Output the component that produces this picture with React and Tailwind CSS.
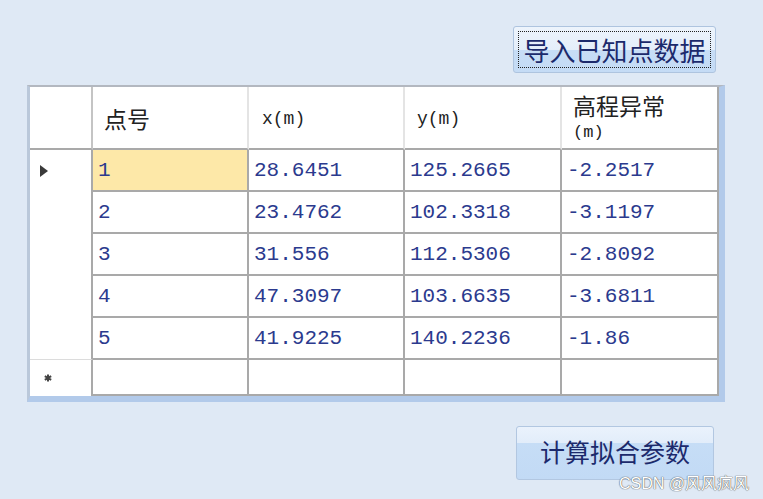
import React from "react";

const rows = [
  ["1", "28.6451", "125.2665", "-2.2517"],
  ["2", "23.4762", "102.3318", "-3.1197"],
  ["3", "31.556", "112.5306", "-2.8092"],
  ["4", "47.3097", "103.6635", "-3.6811"],
  ["5", "41.9225", "140.2236", "-1.86"],
];

const cjk = "font-['Noto_Sans_CJK_SC',sans-serif]";
const mono = "font-['Liberation_Mono','Noto_Sans_CJK_SC',monospace]";
const widths = ["w-[156px]", "w-[156px]", "w-[157px]", "w-[157px]"];

function RowArrow() {
  return (
    <svg width="8" height="12" viewBox="0 0 8 12">
      <polygon points="0,0 8,6 0,12" fill="#3a3a3a" />
    </svg>
  );
}

function NewRowStar() {
  return (
    <svg width="8" height="8" viewBox="0 0 8 8">
      <path d="M4 0.5 L4 7.5 M0.8 2.2 L7.2 5.8 M0.8 5.8 L7.2 2.2" stroke="#444" strokeWidth="2" />
    </svg>
  );
}

export default function App() {
  return (
    <div className={`relative w-[763px] h-[499px] bg-[#dfe9f5] flex flex-col ${cjk}`}>
      <div className="flex justify-end pt-[26px] pr-[47px]">
        <button className="relative w-[203px] h-[47px] rounded-[3px] border border-[#aec4df] bg-[linear-gradient(#edf4fc_0%,#e4eefa_50%,#c7ddf6_52%,#c4dbf5_100%)] p-[4px]">
          <div className="w-full h-full border border-dotted border-[#222] flex items-center justify-center text-[26px] leading-none text-[#1c2a6c]">
            导入已知点数据
          </div>
        </button>
      </div>

      <div className="mt-[12px] ml-[27px] w-[698px] border-l-[3px] border-l-[#bac8da] border-t-2 border-t-[#b3b8c0] border-r-[6px] border-r-[#b2caea] border-b-[6px] border-b-[#b2caea] bg-white">
        <div className="flex h-[63px]">
          <div className="w-[63px] border-r-2 border-r-[#c4c4c4] border-b-2 border-b-[#a9a9a9]" />
          <div className={`${widths[0]} border-r-2 border-r-[#e4e4e4] border-b-2 border-b-[#a9a9a9] flex items-center pl-[11px] pt-[2px] text-[23px] text-[#222]`}>
            点号
          </div>
          <div className={`${widths[1]} border-r-2 border-r-[#e4e4e4] border-b-2 border-b-[#a9a9a9] flex items-center pl-[13px] pt-[4px] text-[18px] text-[#222] ${mono}`}>
            x(m)
          </div>
          <div className={`${widths[2]} border-r-2 border-r-[#e4e4e4] border-b-2 border-b-[#a9a9a9] flex items-center pl-[12px] pt-[4px] text-[18px] text-[#222] ${mono}`}>
            y(m)
          </div>
          <div className={`${widths[3]} border-r-2 border-r-[#a9a9a9] border-b-2 border-b-[#a9a9a9] flex flex-col justify-center items-start pl-[11px] text-[#222]`}>
            <span className="block text-[23px] leading-[23px]">高程异常</span>
            <span className={`block mt-[7px] text-[17px] leading-[18px] ${mono}`}>(m)</span>
          </div>
        </div>

        {rows.map((r, i) => (
          <div key={i} className="flex h-[42px]">
            <div className={`w-[63px] border-r-2 border-r-[#a9a9a9] flex items-center pl-[10px] ${i === 4 ? "border-b border-b-[#dcdcdc]" : ""}`}>
              {i === 0 && <RowArrow />}
            </div>
            {r.map((v, j) => (
              <div
                key={j}
                className={`${widths[j]} border-r-2 border-b-2 border-[#a9a9a9] flex items-center pl-[5px] pt-[1px] text-[21px] text-[#2b3a8e] ${mono} ${i === 0 && j === 0 ? "bg-[#fde8a8]" : ""}`}
              >
                {v}
              </div>
            ))}
          </div>
        ))}

        <div className="flex h-[36px]">
          <div className="w-[63px] border-r-2 border-r-[#a9a9a9] flex items-center pl-[14px]">
            <NewRowStar />
          </div>
          {widths.map((w, j) => (
            <div key={j} className={`${w} border-r-2 border-b-2 border-[#a9a9a9]`} />
          ))}
        </div>
      </div>

      <div className="flex justify-end mt-[24px] pr-[49px]">
        <button className="w-[198px] h-[54px] rounded-[3px] border border-[#b2c7e1] bg-[linear-gradient(#eaf2fc_0%,#e2edfa_30%,#c6ddf6_31%,#c2daf5_100%)] flex items-center justify-center text-[25px] text-[#1c2a6c] pb-[2px]">
          计算拟合参数
        </button>
      </div>

      <span className="absolute right-[14px] bottom-[7px] text-[16px] leading-none text-white font-['Liberation_Sans','Noto_Sans_CJK_SC',sans-serif] [text-shadow:0_0_1px_#555,0_0_1px_#555]">
        CSDN @风风疯风
      </span>
    </div>
  );
}
